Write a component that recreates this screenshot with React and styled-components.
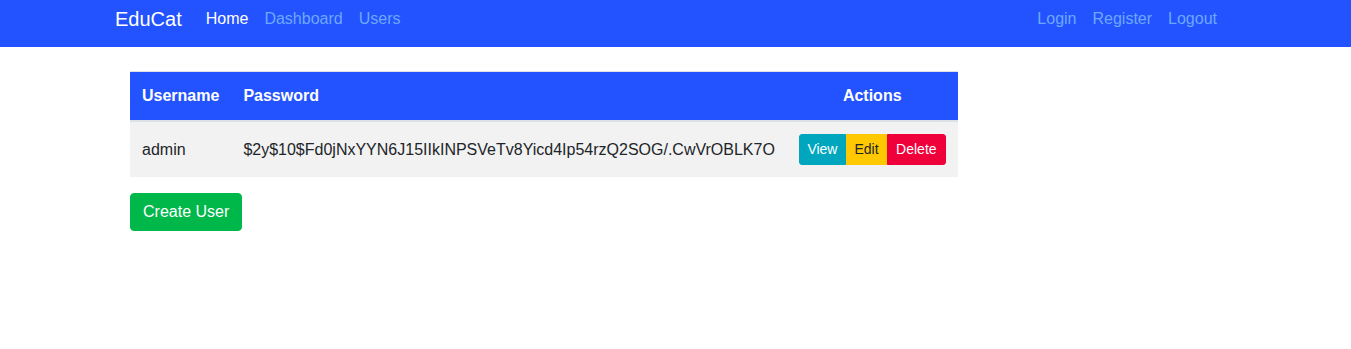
import React from 'react';
import styled, { createGlobalStyle } from 'styled-components';

const GlobalStyle = createGlobalStyle`
  body {
    margin: 0;
    font-family: "Liberation Sans", Arial, sans-serif;
    font-size: 16px;
    line-height: 1.5;
    color: #212529;
    background: #fff;
  }
`;

const NavBar = styled.nav`
  display: flex;
  align-items: flex-start;
  height: 47px;
  padding: 0 126px 0 115px;
  background-color: #2353ff;
`;

const Brand = styled.a`
  font-size: 20px;
  line-height: 30px;
  padding-top: 4px;
  margin-right: 16px;
  color: #fff;
  text-decoration: none;
`;

const NavList = styled.div`
  display: flex;
  margin-left: ${props => (props.right ? 'auto' : '0')};
`;

const NavLink = styled.a`
  padding: 7px 8px 5px;
  line-height: 24px;
  color: ${props => (props.active ? '#fff' : '#6ea8fe')};
  text-decoration: none;
`;

const Main = styled.main`
  padding: 24px 0 0 130px;
`;

const Table = styled.table`
  border-collapse: collapse;
  white-space: nowrap;
`;

const HeadCell = styled.th`
  padding: 12px;
  line-height: 24px;
  text-align: ${props => (props.center ? 'center' : 'left')};
  font-weight: bold;
  color: #fff;
  background-color: #2353ff;
  border-top: 1px solid #dee2e6;
  border-bottom: 2px solid #dee2e6;
`;

const Row = styled.tr`
  background-color: #f2f2f2;
`;

const Cell = styled.td`
  padding: 12px;
  line-height: 24px;
  vertical-align: middle;
  text-align: ${props => (props.center ? 'center' : 'left')};
`;

const ButtonGroup = styled.div`
  display: inline-flex;
  vertical-align: middle;
`;

const SmallButton = styled.button`
  font-family: inherit;
  font-size: 14px;
  line-height: 21px;
  padding: 4px ${props => props.px || 8}px;
  border: 1px solid ${props => props.bg};
  background-color: ${props => props.bg};
  color: ${props => props.fg || '#fff'};
  border-radius: 0;
  cursor: pointer;

  &:first-child {
    border-radius: 3px 0 0 3px;
  }
  &:last-child {
    border-radius: 0 3px 3px 0;
  }
`;

const CreateButton = styled.button`
  margin-top: 16px;
  font-family: inherit;
  font-size: 16px;
  line-height: 24px;
  padding: 6px 12px;
  border: 1px solid #00b74a;
  border-radius: 4px;
  background-color: #00b74a;
  color: #fff;
  cursor: pointer;
`;

const users = [
  { username: 'admin', password: '$2y$10$Fd0jNxYYN6J15IIkINPSVeTv8Yicd4Ip54rzQ2SOG/.CwVrOBLK7O' },
];

export default function App() {
  return (
    <>
      <GlobalStyle />
      <NavBar>
        <Brand href="#">EduCat</Brand>
        <NavList>
          <NavLink href="#" active>Home</NavLink>
          <NavLink href="#">Dashboard</NavLink>
          <NavLink href="#">Users</NavLink>
        </NavList>
        <NavList right>
          <NavLink href="#">Login</NavLink>
          <NavLink href="#">Register</NavLink>
          <NavLink href="#">Logout</NavLink>
        </NavList>
      </NavBar>
      <Main>
        <Table>
          <thead>
            <tr>
              <HeadCell>Username</HeadCell>
              <HeadCell>Password</HeadCell>
              <HeadCell center>Actions</HeadCell>
            </tr>
          </thead>
          <tbody>
            {users.map(u => (
              <Row key={u.username}>
                <Cell>{u.username}</Cell>
                <Cell>{u.password}</Cell>
                <Cell center>
                  <ButtonGroup>
                    <SmallButton bg="#00a6bd" px={7.5}>View</SmallButton>
                    <SmallButton bg="#ffc800" fg="#212529" px={7.5}>Edit</SmallButton>
                    <SmallButton bg="#f0003a">Delete</SmallButton>
                  </ButtonGroup>
                </Cell>
              </Row>
            ))}
          </tbody>
        </Table>
        <CreateButton>Create User</CreateButton>
      </Main>
    </>
  );
}
